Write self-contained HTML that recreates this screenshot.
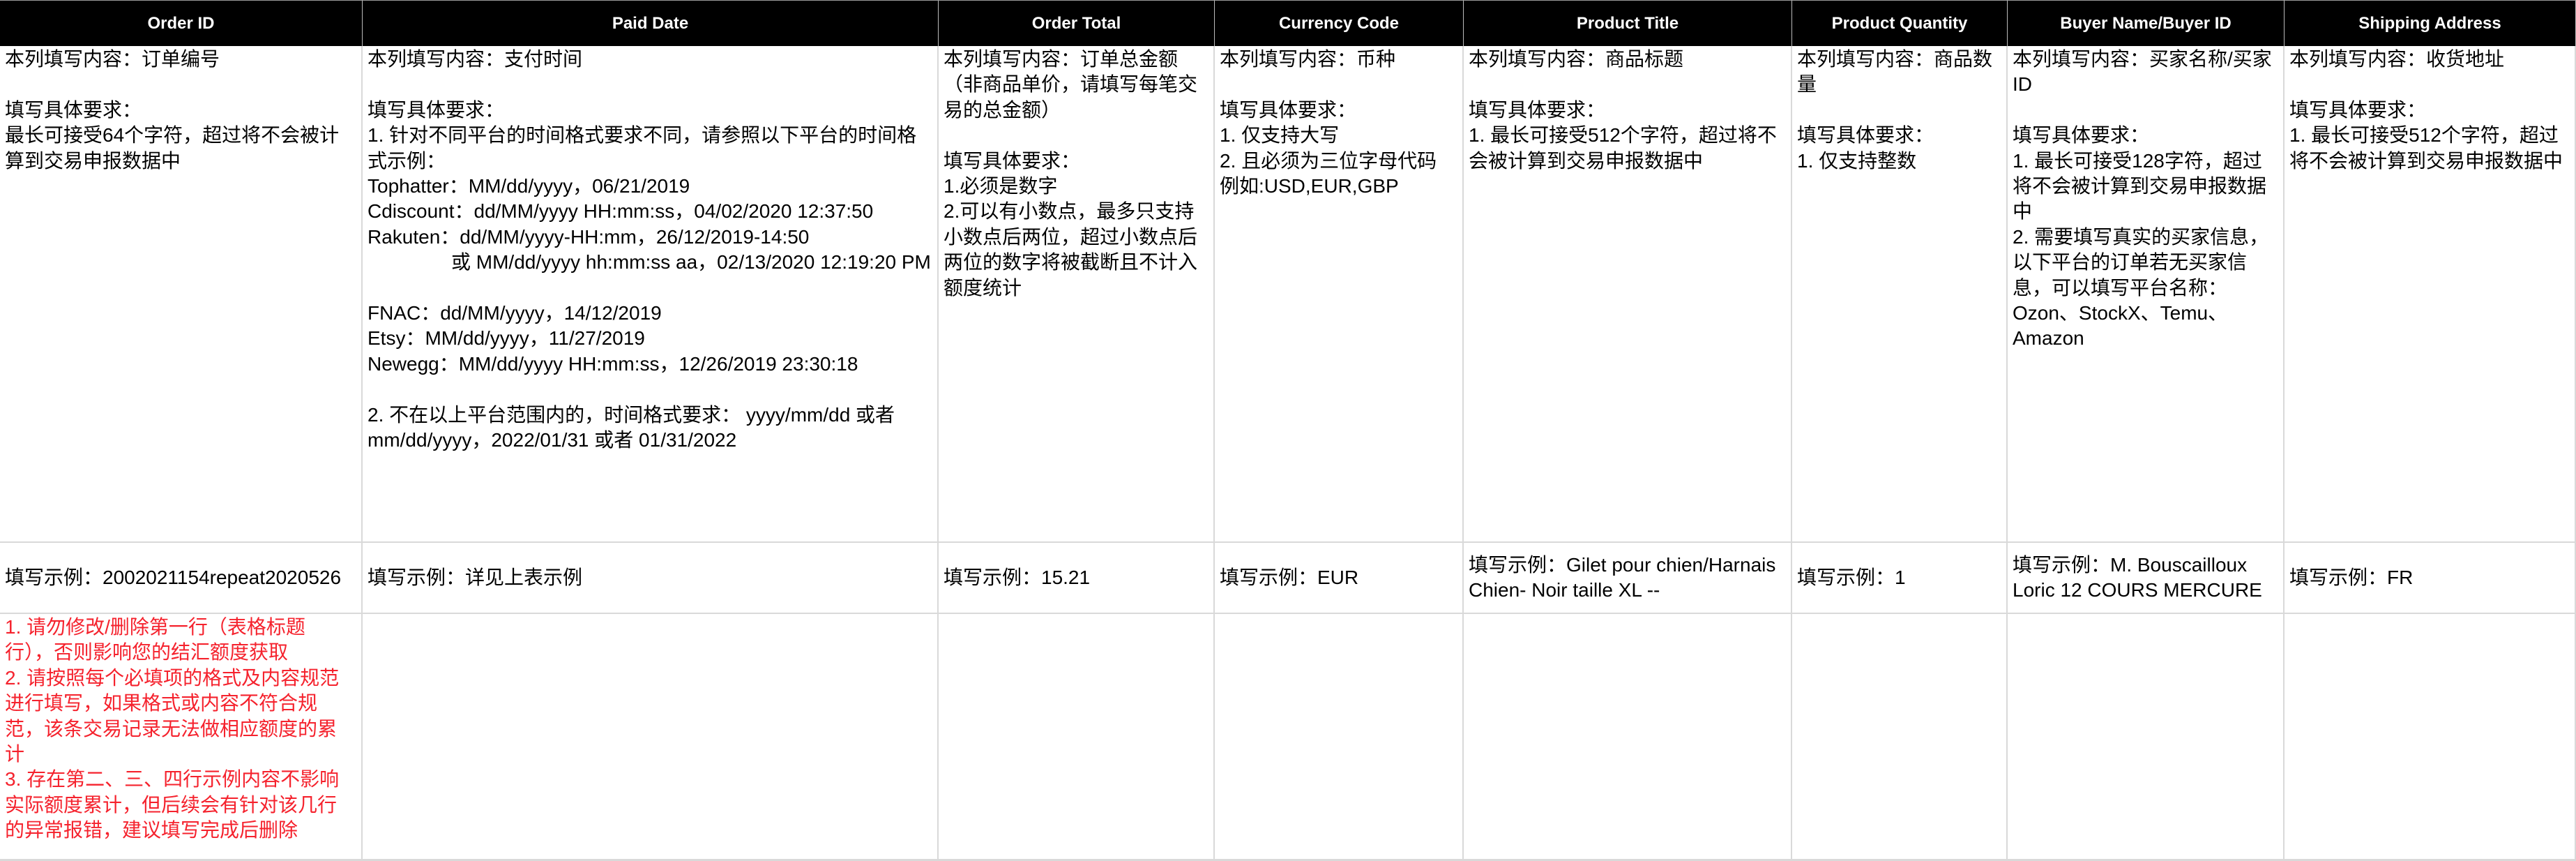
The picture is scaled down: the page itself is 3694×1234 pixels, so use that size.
<!DOCTYPE html>
<html><head><meta charset="utf-8"><style>
*{margin:0;padding:0;box-sizing:border-box}
body{width:3694px;height:1234px;background:#fff;position:relative;overflow:hidden;font-family:"Liberation Sans","Noto Sans CJK SC",sans-serif;color:#000}
.h{position:absolute;top:0;height:66px;background:#000;color:#fff;font-weight:bold;font-size:24px;display:flex;align-items:center;justify-content:center;border-right:1px solid #bbb;border-top:1px solid #999}
.c{position:absolute;font-size:28px;line-height:36.4px;white-space:nowrap;padding:1px 7px;overflow:hidden;border-right:2px solid #d9d9d9;border-bottom:2px solid #d9d9d9}
.m{display:flex;flex-direction:column;justify-content:center}
.r{color:#f5222d}
</style></head><body>
<div class="h" style="left:0;width:520px">Order ID</div>
<div class="h" style="left:520px;width:826px">Paid Date</div>
<div class="h" style="left:1346px;width:396px">Order Total</div>
<div class="h" style="left:1742px;width:357px">Currency Code</div>
<div class="h" style="left:2099px;width:471px">Product Title</div>
<div class="h" style="left:2570px;width:309px">Product Quantity</div>
<div class="h" style="left:2879px;width:397px">Buyer Name/Buyer ID</div>
<div class="h" style="left:3276px;width:418px">Shipping Address</div>

<div class="c" style="left:0;top:66px;width:520px;height:712px">本列填写内容：订单编号<br><br>填写具体要求：<br>最长可接受64个字符，超过将不会被计<br>算到交易申报数据中</div>
<div class="c" style="left:520px;top:66px;width:826px;height:712px">本列填写内容：支付时间<br><br>填写具体要求：<br>1. 针对不同平台的时间格式要求不同，请参照以下平台的时间格<br>式示例：<br>Tophatter：MM/dd/yyyy，06/21/2019<br>Cdiscount：dd/MM/yyyy HH:mm:ss，04/02/2020 12:37:50<br>Rakuten：dd/MM/yyyy-HH:mm，26/12/2019-14:50<br><span style="padding-left:120px">或 MM/dd/yyyy hh:mm:ss aa，02/13/2020 12:19:20 PM</span><br><br>FNAC：dd/MM/yyyy，14/12/2019<br>Etsy：MM/dd/yyyy，11/27/2019<br>Newegg：MM/dd/yyyy HH:mm:ss，12/26/2019 23:30:18<br><br>2. 不在以上平台范围内的，时间格式要求： yyyy/mm/dd 或者<br>mm/dd/yyyy，2022/01/31 或者 01/31/2022</div>
<div class="c" style="left:1346px;top:66px;width:396px;height:712px">本列填写内容：订单总金额<br>（非商品单价，请填写每笔交<br>易的总金额）<br><br>填写具体要求：<br>1.必须是数字<br>2.可以有小数点，最多只支持<br>小数点后两位，超过小数点后<br>两位的数字将被截断且不计入<br>额度统计</div>
<div class="c" style="left:1742px;top:66px;width:357px;height:712px">本列填写内容：币种<br><br>填写具体要求：<br>1. 仅支持大写<br>2. 且必须为三位字母代码<br>例如:USD,EUR,GBP</div>
<div class="c" style="left:2099px;top:66px;width:471px;height:712px">本列填写内容：商品标题<br><br>填写具体要求：<br>1. 最长可接受512个字符，超过将不<br>会被计算到交易申报数据中</div>
<div class="c" style="left:2570px;top:66px;width:309px;height:712px">本列填写内容：商品数<br>量<br><br>填写具体要求：<br>1. 仅支持整数</div>
<div class="c" style="left:2879px;top:66px;width:397px;height:712px">本列填写内容：买家名称/买家<br>ID<br><br>填写具体要求：<br>1. 最长可接受128字符，超过<br>将不会被计算到交易申报数据<br>中<br>2. 需要填写真实的买家信息，<br>以下平台的订单若无买家信<br>息，可以填写平台名称：<br>Ozon、StockX、Temu、<br>Amazon</div>
<div class="c" style="left:3276px;top:66px;width:418px;height:712px">本列填写内容：收货地址<br><br>填写具体要求：<br>1. 最长可接受512个字符，超过<br>将不会被计算到交易申报数据中</div>

<div class="c m" style="left:0;top:778px;width:520px;height:102px">填写示例：2002021154repeat2020526</div>
<div class="c m" style="left:520px;top:778px;width:826px;height:102px">填写示例：详见上表示例</div>
<div class="c m" style="left:1346px;top:778px;width:396px;height:102px">填写示例：15.21</div>
<div class="c m" style="left:1742px;top:778px;width:357px;height:102px">填写示例：EUR</div>
<div class="c m" style="left:2099px;top:778px;width:471px;height:102px"><div>填写示例：Gilet pour chien/Harnais</div><div>Chien- Noir taille XL --</div></div>
<div class="c m" style="left:2570px;top:778px;width:309px;height:102px">填写示例：1</div>
<div class="c m" style="left:2879px;top:778px;width:397px;height:102px"><div>填写示例：M. Bouscailloux</div><div>Loric 12 COURS MERCURE</div></div>
<div class="c m" style="left:3276px;top:778px;width:418px;height:102px">填写示例：FR</div>

<div class="c r" style="left:0;top:880px;width:520px;height:354px;border-bottom-width:3px">1. 请勿修改/删除第一行（表格标题<br>行），否则影响您的结汇额度获取<br>2. 请按照每个必填项的格式及内容规范<br>进行填写，如果格式或内容不符合规<br>范，该条交易记录无法做相应额度的累<br>计<br>3. 存在第二、三、四行示例内容不影响<br>实际额度累计，但后续会有针对该几行<br>的异常报错，建议填写完成后删除</div>
<div class="c" style="left:520px;top:880px;width:826px;height:354px;border-bottom-width:3px"></div>
<div class="c" style="left:1346px;top:880px;width:396px;height:354px;border-bottom-width:3px"></div>
<div class="c" style="left:1742px;top:880px;width:357px;height:354px;border-bottom-width:3px"></div>
<div class="c" style="left:2099px;top:880px;width:471px;height:354px;border-bottom-width:3px"></div>
<div class="c" style="left:2570px;top:880px;width:309px;height:354px;border-bottom-width:3px"></div>
<div class="c" style="left:2879px;top:880px;width:397px;height:354px;border-bottom-width:3px"></div>
<div class="c" style="left:3276px;top:880px;width:418px;height:354px;border-bottom-width:3px"></div>
</body></html>
